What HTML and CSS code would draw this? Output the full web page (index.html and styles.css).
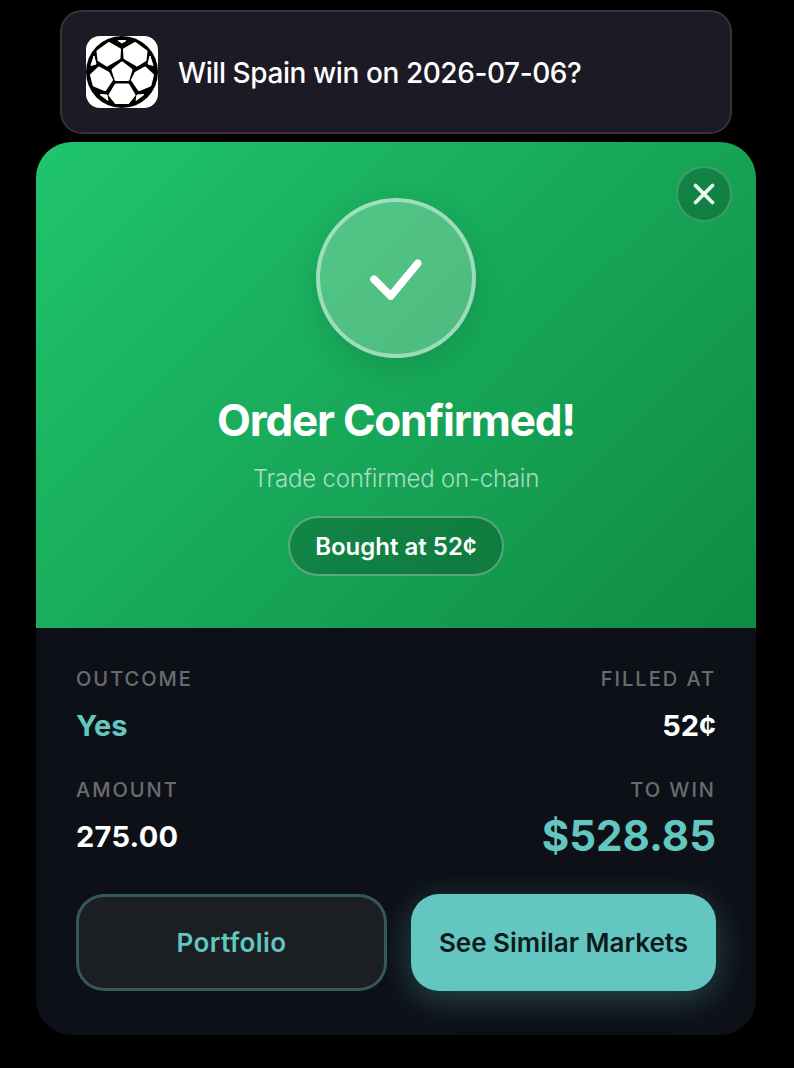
FILE: index.html
```html
<!DOCTYPE html>
<html lang="en">
<head>
<meta charset="utf-8">
<title>Order Confirmed</title>
<link rel="stylesheet" href="styles.css">
</head>
<body>
<main class="page">
  <header class="market">
    <div class="market-icon">
      <svg viewBox="0 0 72 72" width="72" height="72" aria-hidden="true">
        <circle cx="36" cy="36" r="36" fill="#000"/>
        <g class="patch">
          <polygon points="36,27 45,34 42,43.5 30,43.5 27,34"/>
          <polygon points="23,7.5 33.5,13.5 33,22 21,29 13,24 12,15.5"/>
          <polygon points="49,7.5 38.5,13.5 39,22 51,29 59,24 60,15.5"/>
          <polygon points="13,32 22,37 25.5,44 19,53.5 8,49 5.5,39"/>
          <polygon points="59,32 50,37 46.5,44 53,53.5 64,49 66.5,39"/>
          <polygon points="30,49 42,49 48,59 42,66.5 30,66.5 24,59"/>
        </g>
        <g class="patch-small">
          <polygon points="32,4.5 40,4.5 36,7"/>
          <polygon points="8,20 5,29.5 10,28"/>
          <polygon points="64,20 67,29.5 62,28"/>
          <polygon points="14,58.5 22,64.5 21,59"/>
          <polygon points="58,58.5 50,64.5 51,59"/>
        </g>
      </svg>
    </div>
    <h2 class="market-title">Will Spain win on 2026-07-06?</h2>
  </header>

  <section class="card">
    <div class="hero">
      <button class="close" type="button" aria-label="Close">
        <svg viewBox="0 0 24 24" width="24" height="24" aria-hidden="true">
          <path d="M3.5 3.5 L20.5 20.5 M20.5 3.5 L3.5 20.5" fill="none" stroke="#eef7f1" stroke-width="3.8" stroke-linecap="round"/>
        </svg>
      </button>
      <div class="check">
        <svg viewBox="0 0 52 44" width="52" height="44" aria-hidden="true">
          <path d="M4 23.3 L20.7 40 L47.7 7.3" fill="none" stroke="#fff" stroke-width="7.6" stroke-linecap="round" stroke-linejoin="round"/>
        </svg>
      </div>
      <h1 class="hero-title">Order Confirmed!</h1>
      <p class="hero-sub">Trade confirmed on-chain</p>
      <div class="pill">Bought at 52¢</div>
    </div>

    <div class="details">
      <div class="stats">
        <div class="stat">
          <span class="label">OUTCOME</span>
          <span class="value accent">Yes</span>
        </div>
        <div class="stat right">
          <span class="label">FILLED AT</span>
          <span class="value">52¢</span>
        </div>
        <div class="stat">
          <span class="label">AMOUNT</span>
          <span class="value amount">275.00</span>
        </div>
        <div class="stat right">
          <span class="label">TO WIN</span>
          <span class="win">$528.85</span>
        </div>
      </div>
      <div class="actions">
        <button class="btn btn-ghost" type="button">Portfolio</button>
        <button class="btn btn-solid" type="button">See Similar Markets</button>
      </div>
    </div>
  </section>
</main>
</body>
</html>
```
FILE: styles.css
```css
* { box-sizing: border-box; }
html, body { margin: 0; padding: 0; background: #000; }
body { font-family: Inter, "Noto Sans", "Liberation Sans", sans-serif; color: #fff; }
.page {
  width: 794px;
  height: 1068px;
  padding: 10px 38px 0 36px;
  overflow: hidden;
  display: flex;
  flex-direction: column;
  align-items: center;
}
.market {
  width: 672px;
  height: 124px;
  margin-bottom: 8px;
  padding: 0 24px;
  display: flex;
  align-items: center;
  gap: 20px;
  background: #1c1a24;
  border: 2px solid #343436;
  border-radius: 22px;
}
.market-icon {
  width: 72px;
  height: 72px;
  flex: none;
  background: #fff;
  border-radius: 14px;
  overflow: hidden;
}
.market-icon svg { display: block; }
.patch polygon {
  fill: #fff;
  stroke: #fff;
  stroke-width: 3;
  stroke-linejoin: round;
}
.patch-small polygon {
  fill: #fff;
  stroke: #fff;
  stroke-width: 1;
  stroke-linejoin: round;
}
.market-title {
  margin: 2px 0 0;
  font-size: 28px;
  font-weight: 500;
  letter-spacing: -0.42px;
  color: #fff;
}
.card {
  width: 720px;
  height: 893px;
  border-radius: 36px;
  overflow: hidden;
  background: #0d1117;
  display: flex;
  flex-direction: column;
}
.hero {
  position: relative;
  height: 486px;
  padding-top: 56px;
  display: flex;
  flex-direction: column;
  align-items: center;
  background: linear-gradient(135deg, #20c56e 0%, #0f8b43 100%);
}
.close {
  position: absolute;
  top: 24px;
  right: 24px;
  width: 56px;
  height: 56px;
  padding: 0;
  display: flex;
  align-items: center;
  justify-content: center;
  border-radius: 50%;
  border: 2px solid rgba(255, 255, 255, 0.2);
  background: rgba(0, 0, 0, 0.2);
}
.check {
  width: 160px;
  height: 160px;
  display: flex;
  align-items: center;
  justify-content: center;
  border-radius: 50%;
  border: 4px solid rgba(255, 255, 255, 0.45);
  background: rgba(255, 255, 255, 0.24);
  box-shadow: 0 8px 32px rgba(0, 0, 0, 0.12);
}
.hero-title {
  margin: 36px 0 0;
  font-size: 44px;
  line-height: 52px;
  font-weight: 700;
  letter-spacing: -1.2px;
  color: #fff;
}
.hero-sub {
  margin: 18px 0 0;
  font-size: 24px;
  line-height: 30px;
  font-weight: 300;
  letter-spacing: -0.2px;
  color: rgba(255, 255, 255, 0.65);
}
.pill {
  margin-top: 22px;
  height: 60px;
  padding: 0 25px;
  display: flex;
  align-items: center;
  border-radius: 30px;
  border: 2px solid rgba(255, 255, 255, 0.3);
  background: rgba(0, 0, 0, 0.2);
  font-size: 24px;
  font-weight: 600;
  color: #fff;
}
.details { padding: 38px 40px 0; }
.stats {
  display: grid;
  grid-template-columns: 1fr 1fr;
  row-gap: 33px;
}
.stat { display: flex; flex-direction: column; align-items: flex-start; }
.stat.right { align-items: flex-end; }
.label {
  font-size: 20px;
  line-height: 26px;
  font-weight: 500;
  letter-spacing: 2px;
  color: rgba(255, 255, 255, 0.4);
}
.value {
  margin-top: 16px;
  font-size: 29px;
  line-height: 36px;
  font-weight: 700;
  color: #fff;
}
.accent { color: #64c6c0; }
.amount { letter-spacing: 0.3px; }
.win {
  margin-top: 6px;
  font-size: 42px;
  line-height: 54px;
  font-weight: 700;
  color: #64c6c0;
}
.actions {
  margin-top: 31px;
  display: flex;
  gap: 24px;
}
.btn {
  height: 97px;
  border-radius: 28px;
  font-family: inherit;
  font-size: 26px;
  font-weight: 600;
  padding: 0;
}
.btn-ghost {
  width: 311px;
  flex: none;
  border: 3px solid rgba(100, 198, 192, 0.35);
  background: #1b1f23;
  color: #64c6c0;
  letter-spacing: 0.4px;
}
.btn-solid {
  width: 305px;
  flex: none;
  border: 0;
  background: #64c6c0;
  color: #0d1a20;
  box-shadow: 0 8px 32px rgba(100, 198, 192, 0.3);
}
```
